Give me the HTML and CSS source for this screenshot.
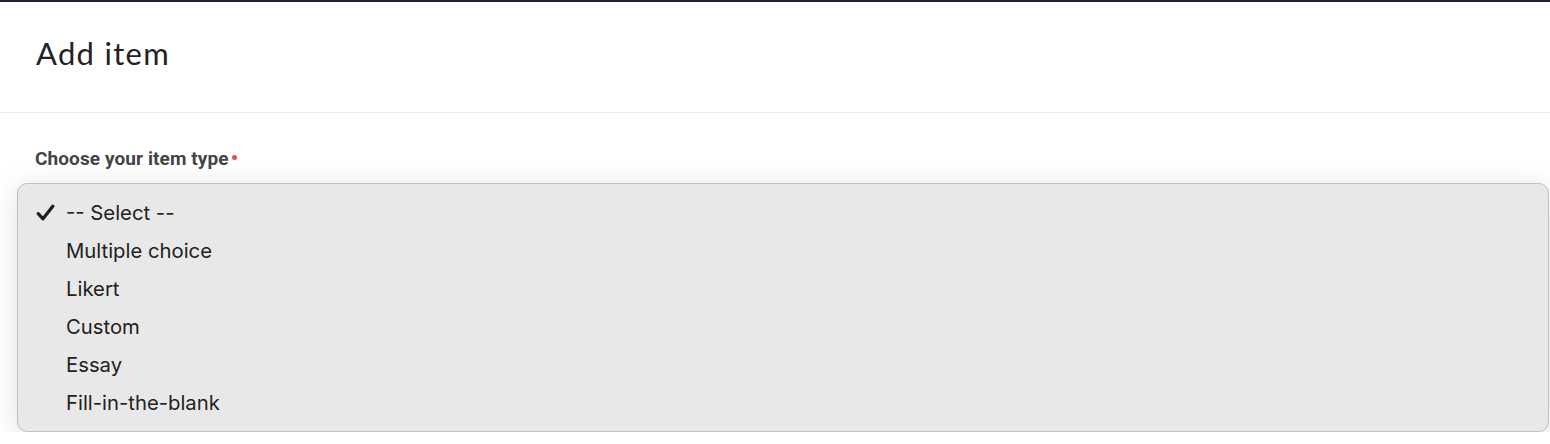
FILE: index.html
```html
<!DOCTYPE html>
<html lang="en">
<head>
    <meta charset="UTF-8">
    <meta name="viewport" content="width=device-width, initial-scale=1.0">
    <title>Add item</title>
    <link rel="stylesheet" href="styles.css">
</head>
<body>
    <div class="modal">
        <div class="modal-header">
            <h1>Add item</h1>
        </div>
        <div class="modal-body">
            <label class="field-label">Choose your item type<span class="required"></span></label>
            <ul class="select-menu">
                <li class="option selected">
                    <span class="check">
                        <svg width="19" height="17" viewBox="0 0 19 17"><path d="M2.2 9.6 L7 14.8 L16.8 2.2" fill="none" stroke="#1e1e1e" stroke-width="3.2" stroke-linecap="round" stroke-linejoin="round"/></svg>
                    </span>-- Select --
                </li>
                <li class="option"><span class="check"></span>Multiple choice</li>
                <li class="option"><span class="check"></span>Likert</li>
                <li class="option"><span class="check"></span>Custom</li>
                <li class="option"><span class="check"></span>Essay</li>
                <li class="option"><span class="check"></span>Fill-in-the-blank</li>
            </ul>
        </div>
    </div>
</body>
</html>
```

FILE: styles.css
```css
body {
    margin: 0;
    background: #fff;
    overflow: hidden;
}
.modal {
    border-top: 2px solid #2b1a38;
}
.modal-header {
    height: 110px;
    border-bottom: 1px solid #ececec;
    padding: 0 36px;
    display: flex;
    align-items: center;
}
.modal-header h1 {
    margin: 0 0 8px 0;
    font-family: Lato, "Noto Sans", sans-serif;
    font-weight: 400;
    font-size: 31px;
    color: #222;
    letter-spacing: 1.3px;
}
.modal-body {
    padding: 35px 1px 0 35px;
}
.field-label {
    display: block;
    font-family: Roboto, "Liberation Sans", sans-serif;
    font-weight: 700;
    font-size: 19px;
    color: #444;
    line-height: 22px;
    letter-spacing: 0.1px;
}
.required {
    display: inline-block;
    width: 5px;
    height: 5px;
    border-radius: 50%;
    background: #f44b4b;
    margin-left: 3px;
    vertical-align: 5px;
}
.select-menu {
    list-style: none;
    margin: 13px 0 0 -18px;
    padding: 9px 0 10px 0;
    background: #e8e8e8;
    border: 1px solid #c2c2c2;
    border-radius: 10px;
    box-shadow: 0 4px 28px rgba(0, 0, 0, 0.13);
    font-family: Inter, "Noto Sans", sans-serif;
    font-size: 20.3px;
    color: #222;
}
.option {
    height: 38px;
    display: flex;
    align-items: center;
}
.check {
    width: 48px;
    padding-left: 18px;
    box-sizing: border-box;
    display: flex;
    align-items: center;
}
```
